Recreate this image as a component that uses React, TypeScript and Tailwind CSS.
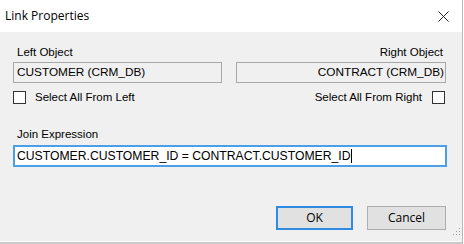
import React from 'react';

const LinkPropertiesDialog: React.FC = () => {
  return (
    <div className="w-[464px] h-[244px] bg-white overflow-hidden font-['Liberation_Sans',Arial,sans-serif] text-[11.5px] text-black">
      <div className="w-[463px] h-full flex flex-col border-r border-[#b9b9b9]">
        {/* Title bar */}
        <header className="h-[32px] shrink-0 bg-white flex items-center justify-between pl-[5px] pr-[13px]">
          <span className="font-['Open_Sans',sans-serif] text-[12px] text-black">Link Properties</span>
          <svg width="11" height="11" viewBox="0 0 11 11">
            <path d="M0.5 0.5 L10.5 10.5 M10.5 0.5 L0.5 10.5" stroke="#222" strokeWidth="1" />
          </svg>
        </header>

        {/* Body */}
        <main className="flex-1 bg-[#f0f0f0] flex flex-col pl-[13px] pr-[15px] pt-[13px] relative">
          <div className="grid grid-cols-[209px_210px] gap-x-[14px]">
            <div className="h-[14px] leading-[14px] pl-[4px]">Left Object</div>
            <div className="h-[14px] leading-[14px] text-right pr-[3px]">Right Object</div>

            <div className="mt-[3px] h-[21px] border border-[#a8a8a8] bg-[#f0f0f0] flex items-center pl-[3px] text-[11.8px]">
              CUSTOMER (CRM_DB)
            </div>
            <div className="mt-[3px] h-[21px] border border-[#a8a8a8] bg-[#f0f0f0] flex items-center justify-end pr-[1px] text-[11.8px]">
              CONTRACT (CRM_DB)
            </div>

            <label className="mt-[8px] h-[13px] flex items-center gap-[9px]">
              <span className="w-[13px] h-[13px] border border-[#333] bg-white" />
              <span>Select All From Left</span>
            </label>
            <label className="mt-[8px] h-[13px] flex items-center justify-end gap-[10px] pr-[1px]">
              <span>Select All From Right</span>
              <span className="w-[13px] h-[13px] border border-[#333] bg-white" />
            </label>
          </div>

          <div className="mt-[23px] h-[14px] leading-[14px] pl-[4px]">Join Expression</div>
          <div className="mt-[4px] w-[434px] h-[22px] border-2 border-[#4a9fe8] bg-white flex items-center pl-[2px] text-[12.2px]">
            <span>CUSTOMER.CUSTOMER_ID = CONTRACT.CUSTOMER_ID</span>
            <span className="w-px h-[14px] bg-black" />
          </div>

          <div className="mt-[39px] flex justify-end gap-[14px] pr-[1px]">
            <button className="w-[77px] h-[24px] bg-[#e1e1e1] border-2 border-[#2f8be0] text-[12px] font-['Open_Sans',sans-serif]">
              OK
            </button>
            <button className="w-[79px] h-[24px] bg-[#e1e1e1] border border-[#adadad] text-[12px] font-['Open_Sans',sans-serif]">
              Cancel
            </button>
          </div>

          {/* size grip */}
          <svg width="8" height="8" viewBox="0 0 8 8" className="absolute right-[1px] bottom-[5px]">
            <rect x="6" y="0" width="1" height="1" fill="#a0a0a0" />
            <rect x="3" y="3" width="1" height="1" fill="#a0a0a0" />
            <rect x="6" y="3" width="1" height="1" fill="#a0a0a0" />
            <rect x="0" y="6" width="1" height="1" fill="#a0a0a0" />
            <rect x="3" y="6" width="1" height="1" fill="#a0a0a0" />
            <rect x="6" y="6" width="1" height="1" fill="#a0a0a0" />
          </svg>
        </main>

        {/* cut-off strip of the window below */}
        <footer className="h-[3px] shrink-0 flex flex-col">
          <div className="h-px bg-[#fbfbfb]" />
          <div className="h-[2px] bg-[#c9c9c9]" />
        </footer>
      </div>
    </div>
  );
};

export default LinkPropertiesDialog;
